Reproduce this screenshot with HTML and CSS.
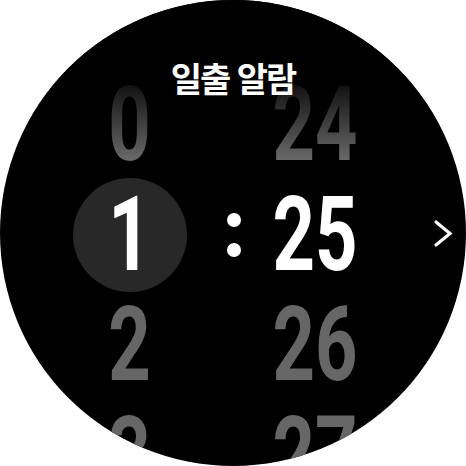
FILE: index.html
```html
<!DOCTYPE html>
<html lang="ko">
<head>
<meta charset="utf-8">
<link rel="stylesheet" href="styles.css">
</head>
<body>
<div class="watch">
  <div class="picker">
    <div class="col hours">
      <div class="cell dim"><span class="num">0</span></div>
      <div class="cell sel"><span class="ring"></span><span class="num">1</span></div>
      <div class="cell dim"><span class="num">2</span></div>
      <div class="cell dim"><span class="num">3</span></div>
    </div>
    <div class="col sep">
      <div class="cell"></div>
      <div class="cell"><span class="colon"><i></i><i></i></span></div>
    </div>
    <div class="col mins">
      <div class="cell dim"><span class="num">24</span></div>
      <div class="cell sel"><span class="num">25</span></div>
      <div class="cell dim"><span class="num">26</span></div>
      <div class="cell dim"><span class="num">27</span></div>
    </div>
  </div>
  <div class="fade"></div>
  <div class="title">일출 알람</div>
  <svg class="chev" width="24" height="30" viewBox="0 0 24 30"><polyline points="3,3 17,14.5 3,26" fill="none" stroke="#fff" stroke-width="3.2" stroke-linecap="round" stroke-linejoin="miter"/></svg>
</div>
</body>
</html>
```
FILE: styles.css
```css
html, body {
  margin: 0;
  padding: 0;
  background: #fff;
}
.watch {
  position: relative;
  width: 466px;
  height: 466px;
  border-radius: 50%;
  background: #000;
  overflow: hidden;
}
.picker {
  display: flex;
  padding-left: 73px;
  padding-top: 70px;
}
.col {
  display: flex;
  flex-direction: column;
}
.hours { width: 114px; }
.sep { width: 94px; }
.mins { width: 68px; }
.cell {
  position: relative;
  height: 110px;
  display: flex;
  justify-content: center;
  align-items: center;
  font-family: Roboto, "Liberation Sans", sans-serif;
  font-weight: 700;
  font-size: 103px;
  line-height: 110px;
  white-space: nowrap;
}
.num {
  position: relative;
  display: inline-block;
  transform: scaleX(0.72);
}
.dim { color: #666; }
.sel { color: #fff; }
.ring {
  position: absolute;
  left: 0;
  top: -2px;
  width: 114px;
  height: 114px;
  border-radius: 50%;
  background: #282828;
}
.colon {
  display: flex;
  flex-direction: column;
  gap: 16px;
}
.colon i {
  display: block;
  width: 14px;
  height: 14px;
  border-radius: 50%;
  background: #fff;
}
.fade {
  position: absolute;
  left: 0;
  top: 0;
  width: 466px;
  height: 160px;
  background: linear-gradient(to bottom, #000 0px, #000 70px, rgba(0,0,0,0) 158px);
}
.title {
  position: absolute;
  left: 0;
  top: 61px;
  width: 466px;
  text-align: center;
  font-family: "Noto Sans CJK KR", "Noto Sans", sans-serif;
  font-weight: 700;
  font-size: 34px;
  line-height: 1;
  letter-spacing: -2px;
  color: #fff;
}
.chev {
  position: absolute;
  left: 433px;
  top: 219px;
}
```
